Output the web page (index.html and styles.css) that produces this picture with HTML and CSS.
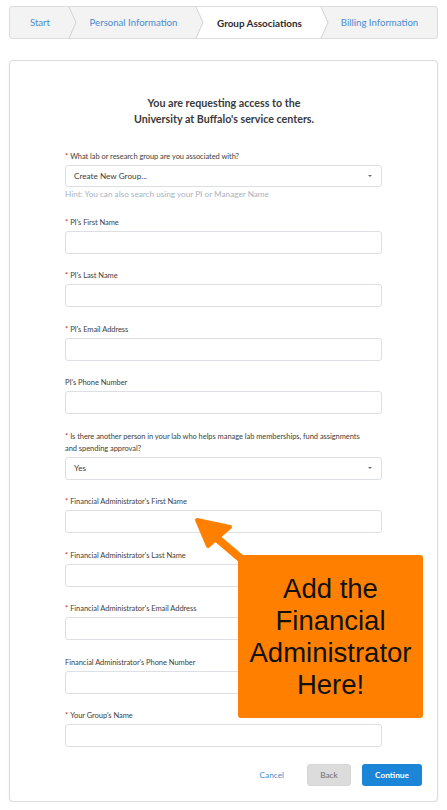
FILE: index.html
```html
<!DOCTYPE html>
<html lang="en">
<head>
<meta charset="utf-8">
<title>Group Associations</title>
<link rel="stylesheet" href="styles.css">
</head>
<body>
<div class="page">
  <nav class="steps">
    <div class="step step-start"><span class="step-link">Start</span><svg class="chev" viewBox="0 0 8 31" width="8" height="31"><polygon points="0,0 7,15.5 0,31" class="chev-fill-gray"/><polyline points="0,0 7,15.5 0,31" class="chev-line"/></svg></div>
    <div class="step step-personal"><span class="step-link">Personal Information</span><svg class="chev" viewBox="0 0 8 31" width="8" height="31"><polygon points="0,0 7,15.5 0,31" class="chev-fill-gray"/><polyline points="0,0 7,15.5 0,31" class="chev-line"/></svg></div>
    <div class="step step-active"><span class="step-current">Group Associations</span><svg class="chev" viewBox="0 0 8 31" width="8" height="31"><polygon points="0,0 7,15.5 0,31" class="chev-fill-white"/><polyline points="0,0 7,15.5 0,31" class="chev-line"/></svg></div>
    <div class="step step-billing"><span class="step-link">Billing Information</span></div>
  </nav>

  <main class="card">
    <h1 class="title">You are requesting access to the<br>University at Buffalo's service centers.</h1>
    <div class="form">
      <div class="field">
        <div class="lbl"><span class="req">*</span>What lab or research group are you associated with?</div>
        <div class="select select-first"><span>Create New Group...</span><span class="caret"></span></div>
        <div class="hint">Hint: You can also search using your PI or Manager Name</div>
      </div>
      <div class="field">
        <div class="lbl"><span class="req">*</span>PI's First Name</div>
        <div class="input"></div>
      </div>
      <div class="field">
        <div class="lbl"><span class="req">*</span>PI's Last Name</div>
        <div class="input"></div>
      </div>
      <div class="field">
        <div class="lbl"><span class="req">*</span>PI's Email Address</div>
        <div class="input"></div>
      </div>
      <div class="field">
        <div class="lbl">PI's Phone Number</div>
        <div class="input"></div>
      </div>
      <div class="field">
        <div class="lbl lbl-long"><span class="req">*</span>Is there another person in your lab who helps manage lab memberships, fund assignments and spending approval?</div>
        <div class="select"><span>Yes</span><span class="caret"></span></div>
      </div>
      <div class="field">
        <div class="lbl"><span class="req">*</span>Financial Administrator's First Name</div>
        <div class="input"></div>
      </div>
      <div class="field">
        <div class="lbl"><span class="req">*</span>Financial Administrator's Last Name</div>
        <div class="input"></div>
      </div>
      <div class="field">
        <div class="lbl"><span class="req">*</span>Financial Administrator's Email Address</div>
        <div class="input"></div>
      </div>
      <div class="field">
        <div class="lbl">Financial Administrator's Phone Number</div>
        <div class="input"></div>
      </div>
      <div class="field">
        <div class="lbl"><span class="req">*</span>Your Group's Name</div>
        <div class="input"></div>
      </div>
    </div>
    <div class="actions">
      <button class="btn btn-cancel">Cancel</button>
      <button class="btn btn-back">Back</button>
      <button class="btn btn-continue">Continue</button>
    </div>
  </main>

  <svg class="arrow" viewBox="0 0 70 60" width="70" height="60">
    <line x1="22" y1="24" x2="62" y2="58" class="arrow-shaft"/>
    <polygon points="7,10 40,17 18,36" class="arrow-head"/>
  </svg>
  <div class="callout">Add the<br>Financial<br>Administrator<br>Here!</div>
</div>
</body>
</html>
```

FILE: styles.css
```css
* { box-sizing: border-box; }

html, body {
  margin: 0;
  padding: 0;
  background: #ffffff;
}

body {
  font-family: Lato, "Open Sans", "Liberation Sans", sans-serif;
  color: #3e3e3c;
}

.page {
  position: relative;
  width: 447px;
  padding: 6px 9px 0 9px;
}

/* ---------- Breadcrumb steps ---------- */
.steps {
  display: flex;
  width: 429px;
  height: 33px;
  border: 1px solid #dcdcdc;
  border-radius: 3px;
  background: #f3f3f3;
}

.step {
  position: relative;
  display: flex;
  align-items: center;
  justify-content: center;
  font-size: 9.6px;
  white-space: nowrap;
}

.step-start { width: 60px; }
.step-personal { width: 127px; }
.step-active { width: 125px; background: #ffffff; }
.step-billing { flex: 1; }

.step-link { color: #4a8bd0; }
.step-current { color: #2b2b2b; font-weight: 700; font-size: 9.9px; }

.chev {
  position: absolute;
  right: -7px;
  top: 0;
  z-index: 1;
  overflow: visible;
}

.chev-fill-gray { fill: #f3f3f3; }
.chev-fill-white { fill: #ffffff; }
.chev-line { fill: none; stroke: #d3d3d3; stroke-width: 1; }

/* ---------- Card ---------- */
.card {
  margin-top: 21px;
  width: 429px;
  border: 1px solid #dddbda;
  border-radius: 4px;
  box-shadow: 0 1px 2px rgba(0, 0, 0, 0.08);
  padding: 34px 15px 15px 16px;
  background: #ffffff;
}

.title {
  margin: 0 0 24px 0;
  text-align: center;
  font-size: 10.7px;
  line-height: 16px;
  font-weight: 700;
  color: #3a3a3a;
}

.form {
  width: 317px;
  margin-left: 39px;
}

.field {
  margin-bottom: 16.5px;
}

.lbl {
  font-size: 7.5px;
  line-height: 12px;
  color: #3e3e3c;
  margin-bottom: 2px;
  letter-spacing: -0.05px;
}

.lbl-long {
  padding-right: 12px;
}

.req {
  color: #c23934;
  margin-right: 2px;
}

.input,
.select {
  height: 23px;
  border: 1px solid #dcdfe4;
  border-radius: 3px;
  background: #ffffff;
}

.select {
  display: flex;
  align-items: center;
  justify-content: space-between;
  padding: 0 8px 0 8px;
  font-size: 8.2px;
  color: #3e3e3c;
}

.select-first {
  height: 22px;
}

.caret {
  width: 0;
  height: 0;
  border-left: 2px solid transparent;
  border-right: 2px solid transparent;
  border-top: 2.5px solid #6b6d70;
  margin-right: 1px;
}

.hint {
  font-size: 8.2px;
  line-height: 12px;
  color: #a8b3bf;
  margin-top: 1px;
}

/* ---------- Actions ---------- */
.actions {
  display: flex;
  justify-content: flex-end;
  align-items: center;
}

.btn {
  height: 22px;
  border: none;
  border-radius: 3px;
  font-family: Lato, "Open Sans", "Liberation Sans", sans-serif;
  font-size: 8.3px;
  padding: 0;
  cursor: pointer;
}

.btn-cancel {
  background: transparent;
  color: #4a8bd0;
  padding: 0 12px;
  margin-right: 11px;
}

.btn-back {
  width: 44px;
  background: #dcdcdc;
  color: #6b6d70;
  margin-right: 11px;
  border: 1px solid #d6d6d6;
}

.btn-continue {
  width: 60px;
  background: #1b86d8;
  color: #ffffff;
  font-weight: 700;
}

/* ---------- Annotation overlay ---------- */
.arrow {
  position: absolute;
  left: 190px;
  top: 510px;
  overflow: visible;
}

.arrow-shaft {
  stroke: #ff8000;
  stroke-width: 8;
  stroke-linecap: round;
}

.arrow-head {
  fill: #ff8000;
  stroke: #ff8000;
  stroke-width: 4;
  stroke-linejoin: round;
}

.callout {
  position: absolute;
  left: 238px;
  top: 555px;
  width: 185px;
  height: 163px;
  background: #ff8000;
  border-radius: 3px;
  display: flex;
  align-items: center;
  justify-content: center;
  text-align: center;
  font-family: "Liberation Sans", Arial, sans-serif;
  font-size: 27.5px;
  line-height: 32px;
  color: #111111;
}
```
